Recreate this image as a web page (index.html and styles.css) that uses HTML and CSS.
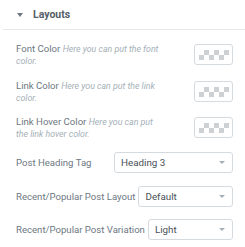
FILE: index.html
```html
<!DOCTYPE html>
<html lang="en">
<head>
    <meta charset="UTF-8">
    <title>Layouts</title>
    <link rel="stylesheet" href="styles.css">
</head>
<body>
    <div class="panel">
        <div class="section-head">
            <span class="caret"></span>
            <span class="section-title">Layouts</span>
        </div>

        <div class="row color-row first">
            <div class="label">Font Color <span class="desc">Here you can put the font color.</span></div>
            <div class="swatch"><span class="checker"></span></div>
        </div>

        <div class="row color-row second">
            <div class="label">Link Color <span class="desc">Here you can put the link color.</span></div>
            <div class="swatch"><span class="checker"></span></div>
        </div>

        <div class="row color-row">
            <div class="label narrow">Link Hover Color <span class="desc">Here you can put the link hover color.</span></div>
            <div class="swatch"><span class="checker"></span></div>
        </div>

        <div class="row select-row heading-tag">
            <label class="label">Post Heading Tag</label>
            <div class="select wide"><span>Heading 3</span><span class="arrow"></span></div>
        </div>

        <div class="row select-row">
            <label class="label">Recent/Popular Post Layout</label>
            <div class="select"><span>Default</span><span class="arrow"></span></div>
        </div>

        <div class="row select-row last">
            <label class="label">Recent/Popular Post Variation</label>
            <div class="select"><span>Light</span><span class="arrow"></span></div>
        </div>
    </div>
</body>
</html>
```

FILE: styles.css
```css
body {
    margin: 0;
    background: #fff;
    font-family: Roboto, "Liberation Sans", sans-serif;
}
.panel {
    width: 245px;
}
.section-head {
    display: flex;
    align-items: center;
    height: 29px;
    margin-left: 3px;
    padding-left: 14px;
    border-bottom: 1px solid #e6e9ec;
}
.caret {
    width: 0;
    height: 0;
    border-left: 3px solid transparent;
    border-right: 3px solid transparent;
    border-top: 4px solid #6d7882;
    margin-right: 10px;
}
.section-title {
    font-size: 10.5px;
    font-weight: bold;
    color: #556068;
}
.row {
    display: flex;
    align-items: center;
    height: 21px;
    padding: 0 12px 0 16px;
}
.label {
    font-size: 9.6px;
    line-height: 11px;
    color: #6d7882;
}
.desc {
    font-size: 8.8px;
    line-height: 11px;
    font-style: italic;
    color: #a4afb7;
}
.color-row {
    justify-content: space-between;
    margin-top: 15px;
}
.color-row.first {
    margin-top: 14px;
}
.color-row.second {
    margin-top: 16px;
}
.color-row .label {
    width: 150px;
}
.color-row .label.narrow {
    width: 145px;
}
.swatch {
    box-sizing: border-box;
    width: 39px;
    height: 21px;
    border: 1px solid #d5dadf;
    border-radius: 3px;
    display: flex;
    align-items: center;
    justify-content: center;
}
.checker {
    width: 30px;
    height: 10px;
    background-color: #fff;
    background-image: conic-gradient(#cdd1d4 25%, transparent 0 50%, #cdd1d4 0 75%, transparent 0);
    background-size: 10px 10px;
}
.select-row {
    justify-content: space-between;
    margin-top: 13px;
}
.heading-tag {
    margin-top: 14px;
}
.select-row.last {
    margin-top: 12px;
}
.select-row .label {
    white-space: nowrap;
}
.select {
    box-sizing: border-box;
    flex: 1;
    margin-left: 3px;
    height: 21px;
    border: 1px solid #d5dadf;
    border-radius: 3px;
    display: flex;
    align-items: center;
    justify-content: space-between;
    padding: 0 7px 0 6px;
    font-size: 9.8px;
    color: #495157;
}
.select.wide {
    flex: none;
    width: 119px;
}
.arrow {
    width: 0;
    height: 0;
    border-left: 3px solid transparent;
    border-right: 3px solid transparent;
    border-top: 3px solid #a4afb7;
}
```
